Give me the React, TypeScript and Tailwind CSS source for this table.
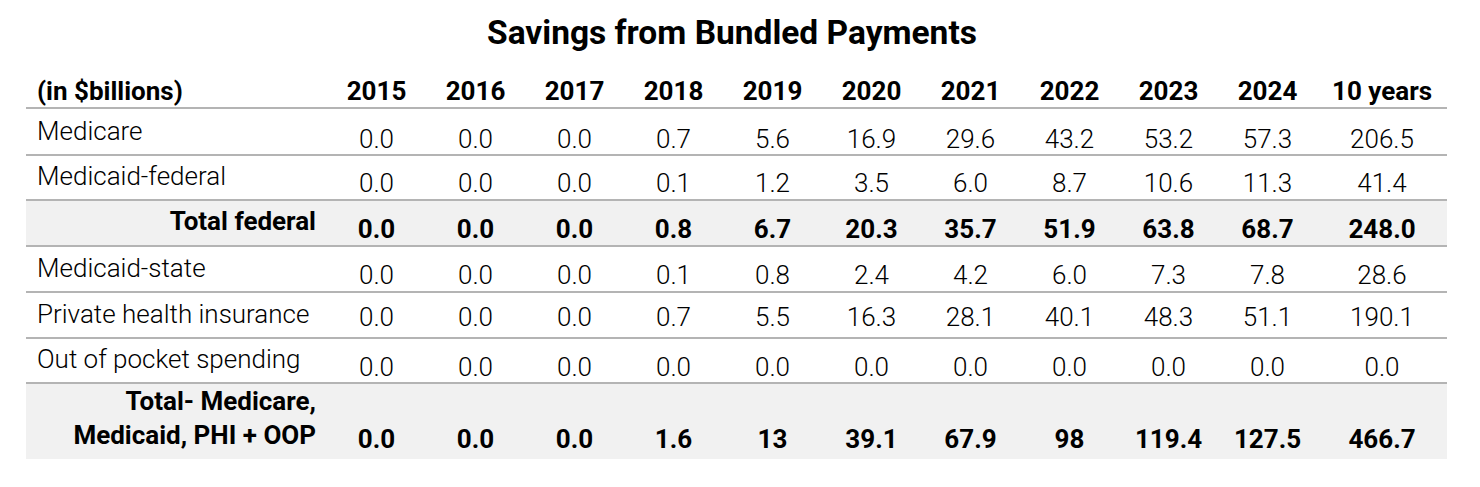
const years = ['2015', '2016', '2017', '2018', '2019', '2020', '2021', '2022', '2023', '2024']

type Row = {
  label: string[]
  values: string[]
  total?: boolean
  h: string
  labelPb: string
  valPb: string
  line: boolean
}

const rows: Row[] = [
  { label: ['Medicare'], values: ['0.0', '0.0', '0.0', '0.7', '5.6', '16.9', '29.6', '43.2', '53.2', '57.3', '206.5'], h: 'h-[47px]', labelPb: 'pb-[6px]', valPb: 'pb-[1px]', line: true },
  { label: ['Medicaid-federal'], values: ['0.0', '0.0', '0.0', '0.1', '1.2', '3.5', '6.0', '8.7', '10.6', '11.3', '41.4'], h: 'h-[45px]', labelPb: 'pb-[6px]', valPb: 'pb-[2px]', line: true },
  { label: ['Total federal'], values: ['0.0', '0.0', '0.0', '0.8', '6.7', '20.3', '35.7', '51.9', '63.8', '68.7', '248.0'], total: true, h: 'h-[46px]', labelPb: 'pb-[7px]', valPb: 'pb-[2px]', line: true },
  { label: ['Medicaid-state'], values: ['0.0', '0.0', '0.0', '0.1', '0.8', '2.4', '4.2', '6.0', '7.3', '7.8', '28.6'], h: 'h-[46px]', labelPb: 'pb-[6px]', valPb: 'pb-[2px]', line: true },
  { label: ['Private health insurance'], values: ['0.0', '0.0', '0.0', '0.7', '5.5', '16.3', '28.1', '40.1', '48.3', '51.1', '190.1'], h: 'h-[46px]', labelPb: 'pb-[6px]', valPb: 'pb-[6px]', line: true },
  { label: ['Out of pocket spending'], values: ['0.0', '0.0', '0.0', '0.0', '0.0', '0.0', '0.0', '0.0', '0.0', '0.0', '0.0'], h: 'h-[45px]', labelPb: 'pb-[6px]', valPb: 'pb-[1px]', line: true },
  { label: ['Total- Medicare,', 'Medicaid, PHI + OOP'], values: ['0.0', '0.0', '0.0', '1.6', '13', '39.1', '67.9', '98', '119.4', '127.5', '466.7'], total: true, h: 'h-[70px]', labelPb: 'pb-[7px]', valPb: 'pb-[6px]', line: false },
]

export default function App() {
  return (
    <div className="w-[1480px] h-[487px] bg-white text-black" style={{ fontFamily: 'Roboto, "Liberation Sans", sans-serif' }}>
      <h1 className="pt-[13px] pr-[16px] h-[62px] text-center text-[33.5px] font-bold leading-[40px]">
        Savings from Bundled Payments
      </h1>
      <table className="ml-[26px] w-[1421px] border-collapse table-fixed">
        <colgroup>
          <col className="w-[301px]" />
          {years.map((y) => (
            <col key={y} className="w-[99px]" />
          ))}
          <col className="w-[130px]" />
        </colgroup>
        <thead>
          <tr className="h-[46px] border-b-2 border-[#b4b4b4]">
            <th className="text-left align-bottom pl-[11px] pb-[2px] text-[26px] font-bold leading-[28px]">(in $billions)</th>
            {years.map((y) => (
              <th key={y} className="text-center align-bottom pb-[2px] text-[26px] font-bold leading-[28px]">{y}</th>
            ))}
            <th className="text-center align-bottom pb-[2px] text-[26px] font-bold leading-[28px]">10 years</th>
          </tr>
        </thead>
        <tbody>
          {rows.map((r, i) => (
            <tr
              key={i}
              className={`${r.h} ${r.total ? 'bg-[#f1f1f1]' : ''} ${r.line ? 'border-b-2 border-[#b4b4b4]' : ''}`}
            >
              <td
                className={`align-bottom ${r.labelPb} text-[26px] leading-[34px] ${r.total ? 'text-right pr-[11px] font-bold' : 'text-left pl-[11px] font-light'}`}
              >
                {r.label.map((l) => (
                  <div key={l}>{l}</div>
                ))}
              </td>
              {r.values.map((v, j) => (
                <td
                  key={j}
                  className={`text-center align-bottom ${r.valPb} text-[26px] leading-[28px] ${r.total ? 'font-bold' : 'font-light'}`}
                >
                  {v}
                </td>
              ))}
            </tr>
          ))}
        </tbody>
      </table>
    </div>
  )
}
